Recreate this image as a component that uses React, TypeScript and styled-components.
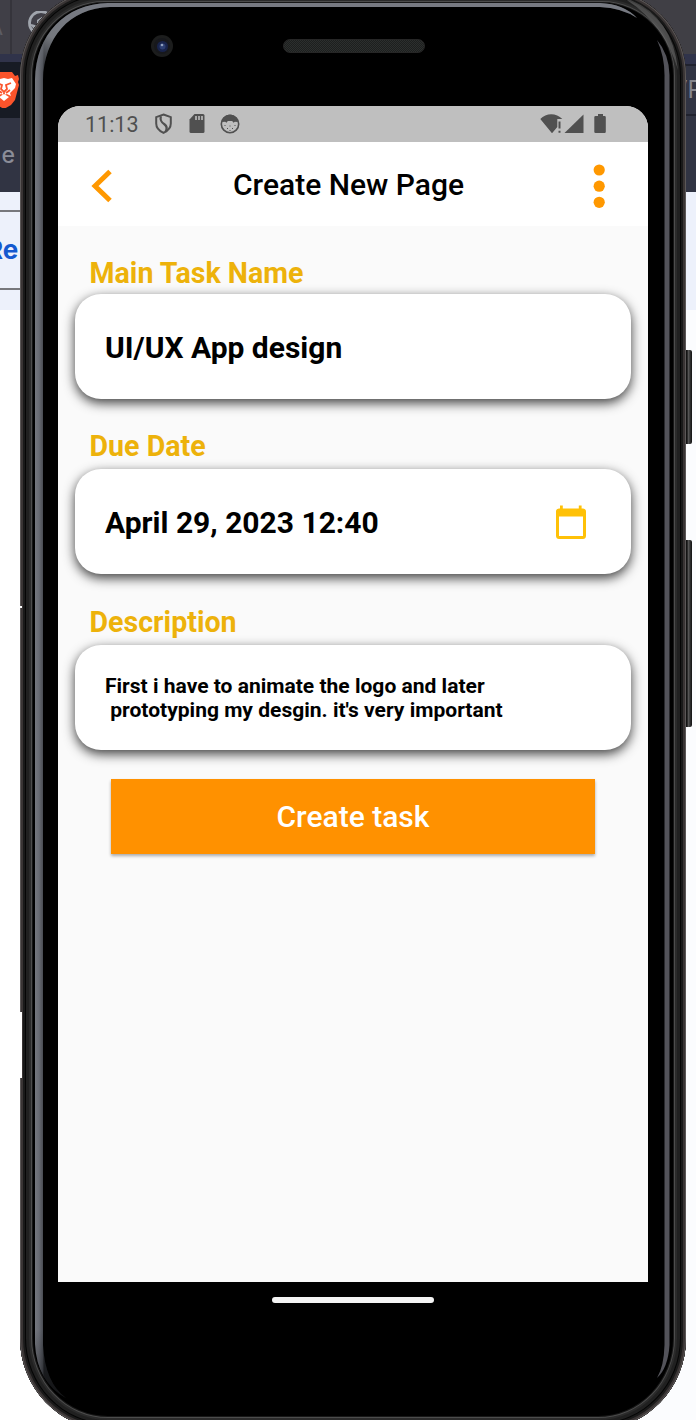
import React from "react";
import styled, { createGlobalStyle } from "styled-components";

const GlobalStyle = createGlobalStyle`
  * { box-sizing: border-box; }
  html, body { margin: 0; padding: 0; overflow: hidden; }
  body { font-family: Roboto, "Liberation Sans", sans-serif; background: #fff; }
`;

/* ---------- desktop behind the emulator ---------- */

const Desktop = styled.div`
  display: grid;
  grid-template-columns: 1fr 1fr;
  grid-template-rows: 1420px;
  width: 696px;
  height: 1420px;
  overflow: hidden;
`;

const Side = styled.div<{ $column: number; $fill: string }>`
  grid-row: 1;
  grid-column: ${(p) => p.$column};
  display: flex;
  flex-direction: column;
  background: ${(p) => p.$fill};
`;

const Strip = styled.div<{ $h: number; $fill: string }>`
  flex: none;
  display: flex;
  align-items: center;
  height: ${(p) => p.$h}px;
  background: ${(p) => p.$fill};
  overflow: hidden;
`;

const Faded = styled.span<{ $size: number; $shift: number; $color: string; $weight?: number }>`
  flex: none;
  font-family: Inter, sans-serif;
  font-size: ${(p) => p.$size}px;
  font-weight: ${(p) => p.$weight ?? 400};
  color: ${(p) => p.$color};
  margin-left: ${(p) => p.$shift}px;
  line-height: 1;
`;

const TabDivider = styled.span`
  width: 2px;
  height: 54px;
  margin-left: 7px;
  margin-right: 14px;
  background: #35343b;
`;

const LinkStrip = styled(Strip)`
  border-top: 2px solid #77787c;
  border-bottom: 2px solid #77787c;
`;

/* ---------- device ---------- */

const Phone = styled.div`
  position: relative;
  grid-row: 1;
  grid-column: 1 / 3;
  width: 666px;
  height: 1439px;
  margin: -10px 0 0 20px;
  padding: 0 38px;
  display: flex;
  flex-direction: column;
  border-radius: 84px 84px 88px 88px / 86px 86px 91px 91px;
  background: #000;
  box-shadow:
    inset 0 0 0 1px #5b5757,
    inset 0 0 0 3px #393434,
    inset 0 0 0 5px #191919,
    inset 0 0 0 6px #050505,
    inset 0 0 0 9px #202020,
    inset 0 0 0 11px #2b2b2b,
    inset 0 0 0 12px #4c4c4c,
    inset 0 0 0 13px #171717;
`;

const Reflections = styled.svg`
  position: absolute;
  left: 0;
  top: 0;
`;

const SideKey = styled.div<{ $top: number; $h: number }>`
  position: absolute;
  left: 666px;
  top: ${(p) => p.$top}px;
  width: 6px;
  height: ${(p) => p.$h}px;
  border-radius: 0 2px 2px 0;
  background: linear-gradient(90deg, #111 0, #171717 1px, #555 2.5px, #333 4px, #111 6px);
`;

const TopBezel = styled.div`
  flex: none;
  height: 116px;
  display: flex;
  align-items: flex-start;
  padding-left: 92px;
`;

const Camera = styled.svg`
  margin-top: 44px;
`;

const Speaker = styled.div`
  width: 142px;
  height: 14px;
  margin: 49px 0 0 109px;
  border: 1px solid #262626;
  border-radius: 7px;
  background: repeating-conic-gradient(#1d1f1e 0 25%, #2c2f2e 0 50%) 0 0 / 2px 2px;
`;

const Screen = styled.div`
  flex: none;
  width: 590px;
  height: 1176px;
  display: flex;
  flex-direction: column;
  border-radius: 22px 22px 0 0;
  overflow: hidden;
  background: #fafafa;
`;

const GestureBar = styled.div`
  width: 162px;
  height: 6px;
  margin: 15px 0 0 214px;
  border-radius: 3px;
  background: #f4f4f4;
`;

/* ---------- app ---------- */

const StatusBar = styled.div`
  flex: none;
  display: flex;
  align-items: center;
  height: 36px;
  padding: 0 41px 0 27px;
  background: #bfbfbf;
  color: #505050;
`;

const Clock = styled.span`
  width: 69px;
  font-size: 21.5px;
  line-height: 36px;
  padding-top: 2px;
`;

const StatusIcons = styled.svg<{ $push?: boolean }>`
  margin-left: ${(p) => (p.$push ? "auto" : "0")};
`;

const AppBar = styled.header`
  flex: none;
  display: flex;
  align-items: center;
  justify-content: space-between;
  height: 84px;
  padding: 4px 42px 0 33px;
  background: #fff;
`;

const Title = styled.h1`
  margin: 0 9px 2px 0;
  font-size: 30px;
  font-weight: 500;
  line-height: 36px;
  color: #000;
  white-space: nowrap;
`;

const Form = styled.main`
  display: flex;
  flex-direction: column;
  padding: 30px 17px 0;
`;

const Label = styled.label<{ $gap: number }>`
  height: 34px;
  margin: 0 0 ${(p) => p.$gap}px 14.5px;
  font-size: 28.6px;
  font-weight: 700;
  line-height: 34px;
  color: #edb20b;
  white-space: nowrap;
`;

const Card = styled.div<{ $after: number }>`
  display: flex;
  align-items: center;
  justify-content: space-between;
  height: 105px;
  margin-bottom: ${(p) => p.$after}px;
  padding: 0 44px 0 30px;
  border-radius: 26px;
  background: #fff;
  box-shadow: 0 4px 12px rgba(0, 0, 0, 0.76);
`;

const Value = styled.span`
  padding-top: 2px;
  font-size: 30px;
  font-weight: 700;
  line-height: 36px;
  color: #000;
  white-space: nowrap;
`;

const Note = styled.span`
  font-size: 21.04px;
  font-weight: 700;
  line-height: 24px;
  color: #000;
  white-space: pre;
`;

const Submit = styled.button`
  width: 484px;
  height: 75px;
  margin: 0 0 0 36px;
  border: 0;
  background: #ff9100;
  box-shadow: 0 2px 3px rgba(0, 0, 0, 0.32);
  color: #fff;
  font: 500 30px/36px Roboto, sans-serif;
`;

const Globe = styled.svg`
  flex: none;
`;

const GlobeIcon = () => (
  <Globe width="32" height="32" viewBox="0 0 32 32" fill="none" stroke="#a0a5ad">
    <circle cx="15" cy="12" r="11.500" strokeWidth="2.800" />
    <path d="M5 14l4 1 2 4v4M12 13V9.500l4-2.500 6 2-1 7-5 1z" strokeWidth="2" fill="#a0a5ad" />
  </Globe>
);

const Lion = styled.svg`
  flex: none;
  margin-left: -11px;
`;

const LionIcon = () => (
  <Lion width="30" height="36" viewBox="0 0 30 36">
    <path d="M7 0h16l3 4 3-1 1 4-1 3 1 3-4 15-4 5-7 4-7-4-4-5L0 13l1-3-1-3 2-4 2 1z" fill="#fb542b" />
    <path d="M15 6l4 1 4-1 4 6-1 4-5 5 1 3-4-2-3 1-3-1-4 2 1-3-5-5-1-4 4-6 4 1z" fill="#fff" />
    <path d="M8 11l5 2-1 4 3 3 3-3-1-4 5-2M9 18l4 3M21 18l-4 3M15 20v3" fill="none" stroke="#fb542b" strokeWidth="1.800" />
    <path d="M10 25l5-3 5 3-5 4z" fill="#fff" />
  </Lion>
);

const NotificationIcons = () => (
  <StatusIcons width="86" height="24" viewBox="0 0 86 24">
    <path d="M9.500 2.500l7.300 2.600v6.400c0 4.300-3 7.400-7.300 9.400-4.300-2-7.300-5.100-7.300-9.400V5.100z" fill="none" stroke="#505050" strokeWidth="2" />
    <path d="M6.800 4.300c-.8 4 .2 5.700 3.600 8 2.700 1.900 2.800 4.500 1.300 7.300" fill="none" stroke="#505050" strokeWidth="2.300" />
    <path d="M40.500 2H49a1.500 1.500 0 0 1 1.500 1.500v16A1.500 1.500 0 0 1 49 21H37a1.500 1.500 0 0 1-1.500-1.500V7.500z" fill="#505050" />
    <path d="M42 4v4M45 4v4M48 4v4" stroke="#bfbfbf" strokeWidth="1.600" />
    <circle cx="76" cy="12" r="8.700" fill="none" stroke="#505050" strokeWidth="1.600" />
    <path d="M68 10c.5-4.500 4-7.200 8-7.200s7.500 2.700 8 7.200l-3.200-.3-1.300 1-1.300-1.700h-4.400l-1.300 1.700-1.300-1z" fill="#505050" />
    <path d="M70.500 13.500h1M73 16.500h1M78 16.500h1M80.500 13.500h1M75.500 14h1M75.500 18.500h1" stroke="#505050" strokeWidth="1" />
  </StatusIcons>
);

const SystemIcons = () => (
  <StatusIcons $push width="68" height="24" viewBox="0 0 68 24" fill="#505050">
    <path d="M1.300 7c5.800-6.500 16-6.500 22 0H18.300v8L13 21.300z" />
    <path d="M19.500 9.500h2v7h-2zM19.500 18.800h2v2h-2z" />
    <path d="M44.500 2.500V21H25.500z" />
    <path d="M59 2h5v2h1.500a1.300 1.300 0 0 1 1.300 1.300v14.400A1.300 1.300 0 0 1 65.500 21h-8.900a1.300 1.300 0 0 1-1.300-1.300V5.300A1.300 1.300 0 0 1 56.600 4H59z" />
  </StatusIcons>
);

const BackIcon = () => (
  <svg width="22" height="34" viewBox="0 0 22 34">
    <path d="M19 2.500L4 17l15 14.500" fill="none" stroke="#ff9800" strokeWidth="5" />
  </svg>
);

const MoreIcon = () => (
  <svg width="13" height="46" viewBox="0 0 13 46" fill="#ff9800">
    <circle cx="6.200" cy="7" r="5.600" />
    <circle cx="6.200" cy="23.200" r="5.600" />
    <circle cx="6.200" cy="39.300" r="5.600" />
  </svg>
);

const CalendarIcon = () => (
  <svg width="32" height="37" viewBox="0 -2 32 37">
    <path
      d="M5 0.500h2.800V3.500h16V0.500h2.800V3.500H28a3.200 3.200 0 0 1 3 3.200V31a3.200 3.200 0 0 1-3 3H4a3.200 3.200 0 0 1-3-3V6.700a3.200 3.200 0 0 1 3-3.200h1zM4 11.500V31h24V11.500z"
      fill="#ffc107"
      fillRule="evenodd"
    />
  </svg>
);

const BezelReflections = () => (
  <Reflections width="666" height="1439" viewBox="20 -10 666 1439">
    <defs>
      <linearGradient id="left" x1="35" x2="44" y1="0" y2="0" gradientUnits="userSpaceOnUse">
        <stop offset="0" stopColor="#74777e" />
        <stop offset="0.450" stopColor="#686b73" />
        <stop offset="0.850" stopColor="#4c4f56" />
        <stop offset="1" stopColor="#25272b" />
      </linearGradient>
      <linearGradient id="corner" x1="35" x2="70" y1="70" y2="5" gradientUnits="userSpaceOnUse">
        <stop offset="0" stopColor="#656971" stopOpacity="0" />
        <stop offset="0.500" stopColor="#75787e" />
        <stop offset="1" stopColor="#777a82" />
      </linearGradient>
      <linearGradient id="fade" x1="0" x2="0" y1="1330" y2="1398" gradientUnits="userSpaceOnUse">
        <stop offset="0" stopColor="#000" stopOpacity="0" />
        <stop offset="1" stopColor="#000" stopOpacity="0.500" />
      </linearGradient>
    </defs>
    <path d="M35 80C36 34 65 4 108 3H600Q624 4 637 18Q622 8 600 7H110C69 8 44 38 43 80V1345Q45 1383 66 1398Q37 1382 35 1344Z" fill="url(#left)" />
    <path d="M35 1330H43V1345Q45 1383 66 1398Q37 1382 35 1344Z" fill="url(#fade)" />
    <path d="M35 80C36 34 65 4 108 3H600Q624 4 637 18Q622 8 600 7H110C69 8 44 38 43 80Z" fill="url(#corner)" />
    <path d="M657 40Q669 54 669.500 75V1345Q668 1368 657 1378Q664 1366 664.500 1345V78Q665 57 657 40Z" fill="#53535a" />
    <path d="M622 -3Q672 12 678 70Q664 22 622 -3Z" fill="#777" opacity="0.500" />
    <path d="M20 606h2v2h-2zM20 1012h2v66h-2z" fill="#fff" />
  </Reflections>
);

const CameraLens = () => (
  <Camera width="24" height="24" viewBox="0 0 24 24">
    <circle cx="12" cy="12" r="11" fill="#1c1d1d" />
    <circle cx="12" cy="12" r="8" fill="#17181c" />
    <circle cx="12.500" cy="12.500" r="5.500" fill="#18234b" />
    <circle cx="12.500" cy="12.500" r="3" fill="#2c3e72" />
    <circle cx="12" cy="11" r="1.300" fill="#91a0bd" />
  </Camera>
);

export default function App() {
  return (
    <>
      <GlobalStyle />
      <Desktop>
        <Side $column={1} $fill="#ffffff">
          <Strip $h={54} $fill="#403f47">
            <Faded $size={22} $shift={-12} $color="#5c5c63">A</Faded>
            <TabDivider />
            <GlobeIcon />
          </Strip>
          <Strip $h={8} $fill="#30334a" />
          <Strip $h={56} $fill="#171b24">
            <LionIcon />
          </Strip>
          <Strip $h={74} $fill="#313443">
            <Faded $size={23} $shift={1.5} $color="#8b8d98" $weight={500}>e</Faded>
          </Strip>
          <Strip $h={18} $fill="#edf1fb" />
          <LinkStrip $h={80} $fill="#edf1fb">
            <Faded $size={26} $shift={-14} $color="#1559cf" $weight={700}>Re</Faded>
          </LinkStrip>
          <Strip $h={20} $fill="#edf1fb" />
        </Side>
        <Side $column={2} $fill="#fbfcfe">
          <Strip $h={54} $fill="#403f45" />
          <Strip $h={10} $fill="#30334a" />
          <Strip $h={2} $fill="#20222e" />
          <Strip $h={48} $fill="#313443">
            <Faded $size={24} $shift={328} $color="#85868d">VP</Faded>
          </Strip>
          <Strip $h={2} $fill="#20222e" />
          <Strip $h={76} $fill="#313443" />
          <Strip $h={118} $fill="#edf1fb" />
        </Side>

        <Phone>
          <BezelReflections />
          <SideKey $top={360} $h={94} />
          <SideKey $top={550} $h={187} />
          <TopBezel>
            <CameraLens />
            <Speaker />
          </TopBezel>
          <Screen>
            <StatusBar>
              <Clock>11:13</Clock>
              <NotificationIcons />
              <SystemIcons />
            </StatusBar>
            <AppBar>
              <BackIcon />
              <Title>Create New Page</Title>
              <MoreIcon />
            </AppBar>
            <Form>
              <Label $gap={4}>Main Task Name</Label>
              <Card $after={30}>
                <Value>UI/UX App design</Value>
              </Card>
              <Label $gap={6}>Due Date</Label>
              <Card $after={31}>
                <Value>April 29, 2023 12:40</Value>
                <CalendarIcon />
              </Card>
              <Label $gap={6}>Description</Label>
              <Card $after={29}>
                <Note>{"First i have to animate the logo and later\n prototyping my desgin. it's very important"}</Note>
              </Card>
              <Submit>Create task</Submit>
            </Form>
          </Screen>
          <GestureBar />
        </Phone>
      </Desktop>
    </>
  );
}
